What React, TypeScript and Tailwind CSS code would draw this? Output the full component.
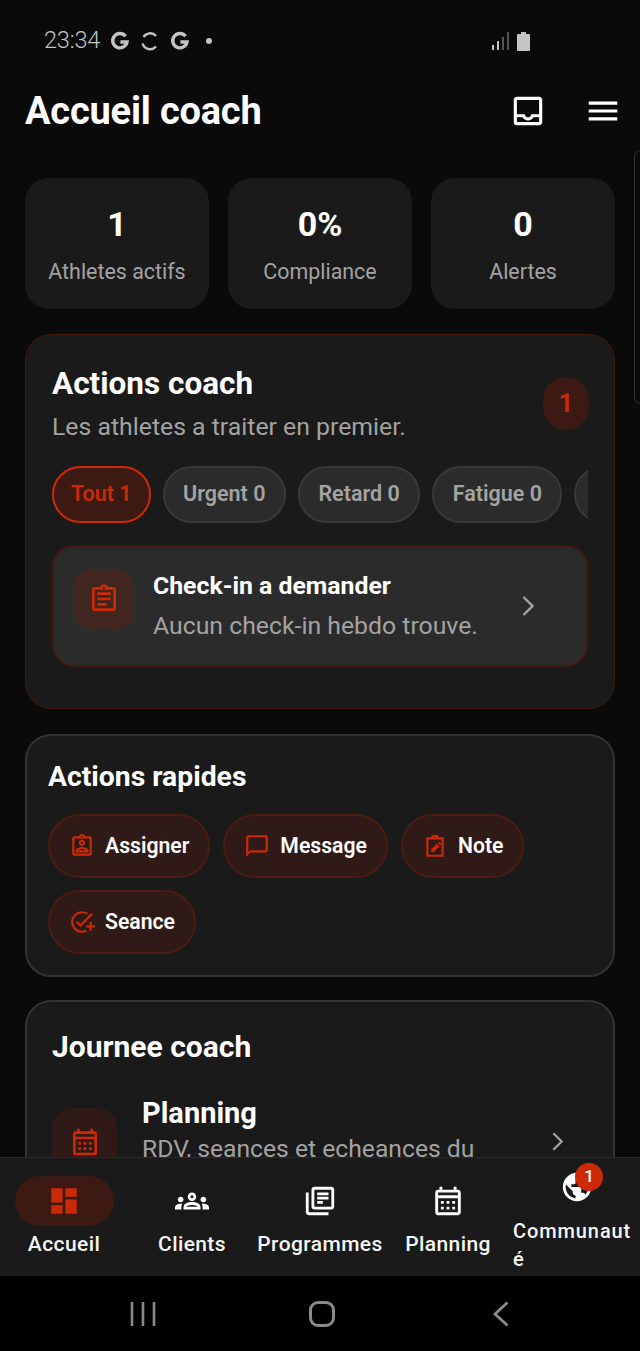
import {
  MdDashboard,
  MdMenu,
  MdOutlineAddTask,
  MdOutlineAssignment,
  MdOutlineAssignmentInd,
  MdOutlineCalendarMonth,
  MdOutlineChatBubbleOutline,
  MdOutlineGroups,
  MdOutlineInbox,
  MdOutlineLibraryBooks,
  MdPublic,
} from 'react-icons/md';

const RED = 'text-[#cc2a06]';

function GoogleMark() {
  return (
    <svg viewBox="0 0 20 20" className="h-5 w-5">
      <path
        d="M15.6 5.2A7.2 7.2 0 1 0 17 11H10.4"
        fill="none"
        stroke="#c4c4c4"
        strokeWidth="3.4"
      />
    </svg>
  );
}

function SyncMark() {
  return (
    <svg viewBox="0 0 20 20" className="h-5 w-5">
      <path
        d="M3.5 6A7.8 7.8 0 0 1 16 5M2.6 12.5A7.8 7.8 0 0 0 16 15.5"
        fill="none"
        stroke="#c4c4c4"
        strokeWidth="2.4"
      />
    </svg>
  );
}

function Chevron({ className }: { className: string }) {
  return (
    <svg viewBox="0 0 12 20" className={className}>
      <path d="M1.5 1L10.5 10L1.5 19" fill="none" stroke="#a3a3a3" strokeWidth="2.4" />
    </svg>
  );
}

function StatusBar() {
  return (
    <div className="flex h-[76px] shrink-0 items-start justify-between pl-11 pr-[110px] pt-[29px]">
      <div className="flex h-6 items-center text-[#c4c4c4]">
        <span className="w-[58px] text-[23.5px] font-light tracking-[-0.2px]">23:34</span>
        <span className="ml-[8px] flex items-center gap-[10px]">
          <GoogleMark />
          <SyncMark />
          <GoogleMark />
        </span>
        <span className="ml-[16px] h-[6px] w-[6px] rounded-full bg-[#c4c4c4]" />
      </div>
      <div className="flex h-6 items-center gap-[8px]">
        <svg viewBox="0 0 17 18" className="h-[18px] w-[17px]">
          <rect x="0" y="13" width="2" height="5" fill="#c4c4c4" />
          <rect x="5" y="9" width="2" height="9" fill="#c4c4c4" />
          <rect x="10" y="5" width="2" height="13" fill="#555" />
          <rect x="15" y="0" width="2" height="18" fill="#555" />
        </svg>
        <svg viewBox="0 0 13 19" className="h-[19px] w-[13px]">
          <path d="M4 0H9V2H12A1 1 0 0 1 13 3V18A1 1 0 0 1 12 19H1A1 1 0 0 1 0 18V3A1 1 0 0 1 1 2H4Z" fill="#c4c4c4" />
        </svg>
      </div>
    </div>
  );
}

function Header() {
  return (
    <div className="flex h-[70px] shrink-0 items-center justify-between pl-[25px] pr-[18px]">
      <h1 className="text-[38px] font-bold tracking-[-0.2px] text-white">Accueil coach</h1>
      <div className="flex items-center gap-[37px]">
        <MdOutlineInbox className="h-[38px] w-[38px] text-white" />
        <MdMenu className="h-[38px] w-[38px] text-white" />
      </div>
    </div>
  );
}

function Stat({ value, label }: { value: string; label: string }) {
  return (
    <div className="flex h-[131px] flex-col items-center rounded-[24px] bg-[#1a1a1a] pt-[24px]">
      <div className="text-[34px] leading-[44px] font-bold text-white">{value}</div>
      <div className="mt-[12px] text-[21.4px] leading-[28px] text-[#a3a3a3]">{label}</div>
    </div>
  );
}

function ActionsCoach() {
  const chips = ['Urgent 0', 'Retard 0', 'Fatigue 0'];

  return (
    <section className="mt-[25px] h-[375px] rounded-[26px] border border-[#43190f] bg-[#1a1a1a] px-[26px] pt-[29px]">
      <div className="flex items-center justify-between">
        <div>
          <h2 className="text-[31.5px] leading-[40px] font-bold text-white">Actions coach</h2>
          <p className="mt-[7px] text-[24.8px] leading-[32px] text-[#a3a3a3]">
            Les athletes a traiter en premier.
          </p>
        </div>
        <div className="mr-[-1px] flex h-[53px] w-[46px] items-center justify-center rounded-full bg-[#3c1a13] text-[25px] font-bold text-[#cc2a06]">
          1
        </div>
      </div>
      <div className="mt-[23px] flex gap-[12px] overflow-hidden">
        <div className="flex h-[57px] shrink-0 items-center rounded-full border-2 border-[#cc2a06] bg-[#3c1a13] px-[17px] text-[21.5px] font-semibold text-[#cc2a06]">
          Tout 1
        </div>
        {chips.map((chip) => (
          <div
            key={chip}
            className="flex h-[57px] shrink-0 items-center rounded-full border-2 border-[#383838] bg-[#2b2b2b] px-[18.5px] text-[21.5px] font-semibold text-[#a3a3a3]"
          >
            {chip}
          </div>
        ))}
        <div className="flex h-[57px] w-[40px] shrink-0 rounded-l-full border-2 border-[#383838] bg-[#2b2b2b]" />
      </div>
      <div className="mt-[22px] flex h-[122px] items-center rounded-[22px] border-2 border-[#43190f] bg-[#2b2b2b] pl-[20px] pr-[52px]">
        <div className="mt-[22px] flex h-[60px] w-[60px] shrink-0 items-center justify-center self-start rounded-[18px] bg-[#412620]">
          <MdOutlineAssignment className={`h-[32px] w-[32px] ${RED}`} />
        </div>
        <div className="ml-[19px] flex-1">
          <div className="text-[24.8px] leading-[32px] font-bold text-white">Check-in a demander</div>
          <div className="mt-[8px] text-[24.8px] leading-[32px] text-[#a3a3a3]">
            Aucun check-in hebdo trouve.
          </div>
        </div>
        <Chevron className="h-[20px] w-[12px]" />
      </div>
    </section>
  );
}

function NoteIcon({ className }: { className: string }) {
  return (
    <svg viewBox="0 0 24 24" className={className}>
      <path
        d="M5 5H19V21H5Z M9 5C9 3 10.5 2.5 12 2.5S15 3 15 5"
        fill="none"
        stroke="currentColor"
        strokeWidth="2"
      />
      <path d="M8.5 17.5V15L13.5 10L16 12.5L11 17.5Z M14.5 9L15.5 8L18 10.5L17 11.5Z" fill="currentColor" />
    </svg>
  );
}

function QuickChip({ label, icon }: { label: string; icon: React.ReactNode }) {
  return (
    <div className="flex h-[64px] items-center gap-[10px] rounded-full border-2 border-[#4a1c12] bg-[#301a17] px-[19px] text-[21.2px] font-semibold text-white">
      {icon}
      {label}
    </div>
  );
}

function ActionsRapides() {
  const iconClass = `h-[26px] w-[26px] shrink-0 ${RED}`;

  return (
    <section className="mt-[25px] h-[243px] rounded-[26px] border-2 border-[#333333] bg-[#1a1a1a] pl-[21px] pt-[22px]">
      <h2 className="text-[28.3px] leading-[38px] font-bold text-white">Actions rapides</h2>
      <div className="mt-[18px] flex flex-wrap gap-x-[13px] gap-y-[12px]">
        <QuickChip label="Assigner" icon={<MdOutlineAssignmentInd className={iconClass} />} />
        <QuickChip label="Message" icon={<MdOutlineChatBubbleOutline className={iconClass} />} />
        <QuickChip label="Note" icon={<NoteIcon className={iconClass} />} />
        <QuickChip label="Seance" icon={<MdOutlineAddTask className={iconClass} />} />
      </div>
    </section>
  );
}

function JourneeCoach() {
  return (
    <section className="mt-[23px] h-[300px] rounded-[26px] border-2 border-[#333333] bg-[#1a1a1a] px-[25px] pt-[25px]">
      <h2 className="text-[30px] leading-[40px] font-bold text-white">Journee coach</h2>
      <div className="mt-[28px] flex items-start">
        <div className="mt-[13px] flex h-[68px] w-[65px] shrink-0 items-center justify-center rounded-[20px] bg-[#301a17]">
          <MdOutlineCalendarMonth className={`h-[32px] w-[32px] ${RED}`} />
        </div>
        <div className="ml-[25px] flex-1">
          <div className="text-[29px] leading-[36px] font-bold text-white">Planning</div>
          <div className="mt-[2px] text-[24.7px] leading-[32px] text-[#a3a3a3]">
            RDV, seances et echeances du
          </div>
        </div>
        <Chevron className="mr-[25px] mt-[37px] h-[19px] w-[11px]" />
      </div>
    </section>
  );
}

function Tab({ label, icon }: { label: string; icon: React.ReactNode }) {
  return (
    <div className="flex w-[128px] flex-col items-center pt-[18px]">
      <div className="flex h-[50px] items-center justify-center">{icon}</div>
      <div className="mt-[4px] text-[21px] leading-[28px] font-medium tracking-[0.4px] whitespace-nowrap text-[#f5f5f5]">
        {label}
      </div>
    </div>
  );
}

function TabBar() {
  const iconClass = 'h-[34px] w-[34px] text-white';

  return (
    <nav className="flex h-[119px] shrink-0 border-t border-[#2a2a2a] bg-[#1a1a1a]">
      <Tab
        label="Accueil"
        icon={
          <div className="flex h-[50px] w-[99px] items-center justify-center rounded-full bg-[#3c1a13]">
            <MdDashboard className={`h-[34px] w-[34px] ${RED}`} />
          </div>
        }
      />
      <Tab label="Clients" icon={<MdOutlineGroups className={iconClass} />} />
      <Tab label="Programmes" icon={<MdOutlineLibraryBooks className={iconClass} />} />
      <Tab label="Planning" icon={<MdOutlineCalendarMonth className={iconClass} />} />
      <div className="relative w-[128px] pl-[1px] pt-[12px]">
        <div className="flex h-[36px] justify-center">
          <MdPublic className="h-[34px] w-[34px] text-white" />
        </div>
        <span className="absolute right-[37px] top-[5px] flex h-[28px] w-[28px] items-center justify-center rounded-full bg-[#cc2a06] text-[17px] font-medium text-white">
          1
        </span>
        <div className="mt-[11px] w-[122px] text-[20px] leading-[28px] font-medium tracking-[0.9px] break-all text-[#f5f5f5]">
          Communauté
        </div>
      </div>
    </nav>
  );
}

function SystemNav() {
  return (
    <div className="flex h-[75px] shrink-0 items-center bg-black">
      <div className="flex w-full items-center justify-between px-[130px]">
        <svg viewBox="0 0 26 26" className="h-[26px] w-[26px]">
          <path d="M2 1V25M13 1V25M24 1V25" stroke="#8a8a8a" strokeWidth="2.6" fill="none" />
        </svg>
        <div className="mr-[4px] h-[26px] w-[26px] rounded-[9px] border-[3px] border-[#8a8a8a]" />
        <svg viewBox="0 0 18 26" className="h-[26px] w-[18px]">
          <path d="M15.5 1.5L3 13L15.5 24.5" stroke="#8a8a8a" strokeWidth="2.8" fill="none" />
        </svg>
      </div>
    </div>
  );
}

export default function App() {
  return (
    <div className="relative flex h-[1351px] w-[640px] flex-col overflow-hidden bg-[#0a0a0a] font-['Roboto',sans-serif]">
      <StatusBar />
      <Header />
      <main className="min-h-0 flex-1 overflow-hidden px-[25px] pt-[32px]">
        <div className="grid grid-cols-3 gap-[19px]">
          <Stat value="1" label="Athletes actifs" />
          <Stat value="0%" label="Compliance" />
          <Stat value="0" label="Alertes" />
        </div>
        <ActionsCoach />
        <ActionsRapides />
        <JourneeCoach />
      </main>
      <TabBar />
      <SystemNav />
      {/* bord de la barre de defilement */}
      <div className="absolute right-[-8px] top-[150px] h-[254px] w-[14px] rounded-[8px] border border-[#333333]" />
    </div>
  );
}
